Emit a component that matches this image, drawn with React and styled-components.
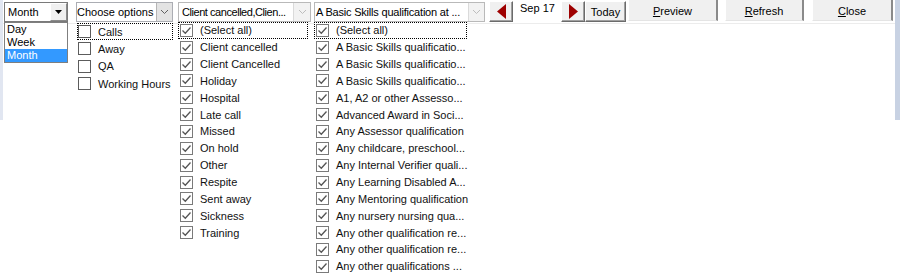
import React from 'react';
import styled, { createGlobalStyle } from 'styled-components';

const GlobalStyle = createGlobalStyle`
  body {
    margin: 0;
    background: #fff;
    font-family: "Liberation Sans", Arial, sans-serif;
    font-size: 11px;
    color: #000;
  }
`;

const Page = styled.div`
  width: 900px;
  height: 273px;
  overflow: visible;
`;

const Frame = styled.div`
  width: 900px;
  height: 120px;
  box-sizing: border-box;
  background: #fff;
  border-left: 3px solid #e1e6f1;
  border-right: 5px solid #c8d2e3;
`;

const Toolbar = styled.div`
  display: flex;
  align-items: flex-start;
  height: 23px;
  padding-left: 1px;
  border-bottom: 1px solid #ececec;
`;

const ComboWrap = styled.div`
  position: relative;
  margin-top: 2px;
  margin-left: ${p => p.gap || 0}px;
  width: ${p => p.w}px;
  flex-shrink: 0;
`;

const Field = styled.div`
  display: flex;
  height: 20px;
  box-sizing: border-box;
  border: 1px solid ${p => p.border};
  background: #fff;
`;

const FieldText = styled.div`
  flex: 1;
  min-width: 0;
  padding-left: ${p => p.pad}px;
  line-height: 18px;
  letter-spacing: ${p => p.tight || 0}px;
  white-space: nowrap;
`;

const ArrowBox = styled.div`
  width: ${p => p.w}px;
  display: flex;
  align-items: center;
  justify-content: center;
  box-sizing: border-box;
  flex-shrink: 0;
  background: ${p => p.bg};
  border-left: 1px solid ${p => p.edge};
`;

const BevelArrow = styled.div`
  width: 17px;
  display: flex;
  align-items: center;
  justify-content: center;
  box-sizing: border-box;
  background: #f0f0f0;
  border: 1px solid;
  border-color: #fff #8a8a8a #8a8a8a #fff;
`;

const MenuList = styled.div`
  position: absolute;
  top: 100%;
  left: 0;
  width: 64px;
  box-sizing: border-box;
  border: 1px solid #7f7f7f;
  background: #fff;
  z-index: 2;
`;

const MenuItem = styled.div`
  height: 13px;
  line-height: 13px;
  padding-left: 2px;
  background: ${p => (p.active ? '#3399ff' : 'transparent')};
  color: ${p => (p.active ? '#fff' : '#000')};
`;

const CheckList = styled.div`
  position: absolute;
  top: 100%;
  left: ${p => p.left || 0}px;
  width: ${p => p.w}px;
  padding-top: ${p => p.top || 0}px;
  background: #fff;
  z-index: 2;
`;

const CheckRow = styled.div`
  display: flex;
  align-items: center;
  height: ${p => p.h}px;
  box-sizing: border-box;
  padding-left: ${p => p.indent}px;
  border: 1px dotted ${p => (p.focus ? '#000' : 'transparent')};
  white-space: nowrap;
  color: #111;
`;

const Box = styled.span`
  width: 13px;
  height: 13px;
  box-sizing: border-box;
  border: 1px solid ${p => (p.checked ? '#7a7a7a' : '#5c5c5c')};
  background: #fff;
  margin-right: 7px;
  flex-shrink: 0;
  display: flex;
  align-items: center;
  justify-content: center;
`;

const NavButton = styled.button`
  width: ${p => p.w}px;
  height: 21px;
  margin-top: 1px;
  margin-left: ${p => p.gap || 0}px;
  padding: 0;
  box-sizing: border-box;
  background: #f0f0f0;
  border: 1px solid;
  border-color: #fff #6b6b6b #6b6b6b #fff;
  box-shadow: inset -1px -1px #a0a0a0;
  font: inherit;
  font-size: 11px;
  color: #000;
  display: flex;
  align-items: center;
  justify-content: center;
  flex-shrink: 0;
`;

const DateLabel = styled.div`
  width: 48px;
  padding: 2px 0 0 7px;
  box-sizing: border-box;
  flex-shrink: 0;
`;

const ActionButton = styled.button`
  width: ${p => p.w}px;
  height: 21px;
  margin-left: ${p => p.gap}px;
  padding: 2px 0 0;
  box-sizing: border-box;
  background: #f0f0f0;
  border: none;
  border-left: 1px solid #fff;
  border-right: 2px solid #8a8a8a;
  border-bottom: 1px solid #e4e4e4;
  font: inherit;
  font-size: 11px;
  color: #000;
  flex-shrink: 0;

  u {
    text-decoration: underline;
  }
`;

const Chevron = ({ color }) => (
  <svg width="9" height="6" viewBox="0 0 9 6">
    <path d="M1 1 L4.5 4.5 L8 1" fill="none" stroke={color} strokeWidth="1" />
  </svg>
);

const Tick = () => (
  <svg width="11" height="11" viewBox="0 0 11 11">
    <path d="M1.5 5.5 L4.3 8.3 L9.5 2.5" fill="none" stroke="#555" strokeWidth="1.3" />
  </svg>
);

const Triangle = ({ dir }) => (
  <svg width="9" height="15" viewBox="0 0 9 15">
    <polygon points={dir === 'left' ? '9,0 9,15 0,7.5' : '0,0 0,15 9,7.5'} fill="#9e0000" />
  </svg>
);

const choose = ['Calls', 'Away', 'QA', 'Working Hours'];

const reasons = [
  '(Select all)', 'Client cancelled', 'Client Cancelled', 'Holiday', 'Hospital',
  'Late call', 'Missed', 'On hold', 'Other', 'Respite', 'Sent away', 'Sickness', 'Training',
];

const quals = [
  '(Select all)',
  'A Basic Skills qualificatio...',
  'A Basic Skills qualificatio...',
  'A Basic Skills qualificatio...',
  'A1, A2 or other Assesso...',
  'Advanced Award in Soci...',
  'Any Assessor qualification',
  'Any childcare, preschool...',
  'Any Internal Verifier quali...',
  'Any Learning Disabled A...',
  'Any Mentoring qualification',
  'Any nursery nursing qua...',
  'Any other qualification re...',
  'Any other qualification re...',
  'Any other qualifications ...',
];

function CheckItems({ items, checked, h, indent }) {
  return items.map((label, i) => (
    <CheckRow key={i} h={h} indent={indent} focus={i === 0}>
      <Box checked={checked}>{checked && <Tick />}</Box>
      {label}
    </CheckRow>
  ));
}

export default function App() {
  return (
    <Page>
      <GlobalStyle />
      <Frame>
        <Toolbar>
          <ComboWrap w={64}>
            <Field border="#7a7a7a">
              <FieldText pad={3}>Month</FieldText>
              <BevelArrow>
                <svg width="7" height="4" viewBox="0 0 7 4">
                  <polygon points="0,0 7,0 3.5,4" fill="#000" />
                </svg>
              </BevelArrow>
            </Field>
            <MenuList>
              <MenuItem>Day</MenuItem>
              <MenuItem>Week</MenuItem>
              <MenuItem active>Month</MenuItem>
            </MenuList>
          </ComboWrap>

          <ComboWrap w={97} gap={8}>
            <Field border="#abadb3">
              <FieldText pad={0}>Choose options</FieldText>
              <ArrowBox w={16} bg="#e3e3e3" edge="#b5b5b5">
                <Chevron color="#606060" />
              </ArrowBox>
            </Field>
            <CheckList left={1} w={96} top={1}>
              <CheckItems items={choose} h={17.3} indent={0} />
            </CheckList>
          </ComboWrap>

          <ComboWrap w={133} gap={5}>
            <Field border="#b9b9b9">
              <FieldText pad={3} tight={-0.45}>Client cancelled,Clien...</FieldText>
              <ArrowBox w={17} bg="#f2f2f2" edge="#dadada">
                <Chevron color="#bdbdbd" />
              </ArrowBox>
            </Field>
            <CheckList w={130}>
              <CheckItems items={reasons} checked h={16.85} indent={1} />
            </CheckList>
          </ComboWrap>

          <ComboWrap w={171} gap={3}>
            <Field border="#b9b9b9">
              <FieldText pad={1} tight={-0.2}>A Basic Skills qualification at ...</FieldText>
              <ArrowBox w={16} bg="#f2f2f2" edge="#dadada">
                <Chevron color="#bdbdbd" />
              </ArrowBox>
            </Field>
            <CheckList w={153}>
              <CheckItems items={quals} checked h={16.85} indent={1} />
            </CheckList>
          </ComboWrap>

          <NavButton w={24} gap={4}><Triangle dir="left" /></NavButton>
          <DateLabel>Sep 17</DateLabel>
          <NavButton w={24}><Triangle dir="right" /></NavButton>
          <NavButton w={41}>Today</NavButton>

          <ActionButton w={90} gap={2}><u>P</u>review</ActionButton>
          <ActionButton w={79} gap={7}><u>R</u>efresh</ActionButton>
          <ActionButton w={81} gap={8}><u>C</u>lose</ActionButton>
        </Toolbar>
      </Frame>
    </Page>
  );
}
